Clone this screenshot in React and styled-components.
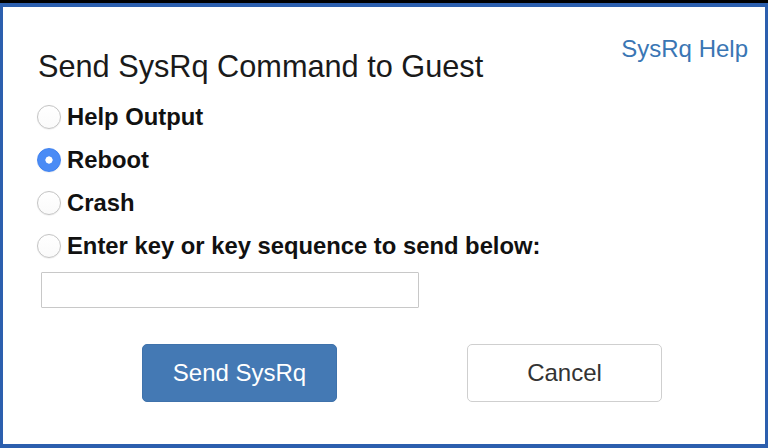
import React, { useState } from 'react';
import styled, { createGlobalStyle } from 'styled-components';

const GlobalStyle = createGlobalStyle`
  html, body {
    margin: 0;
    padding: 0;
    background: #000;
  }
  body {
    font-family: "Liberation Sans", Arial, Helvetica, sans-serif;
  }
`;

const Page = styled.div`
  width: 768px;
  height: 448px;
  padding-top: 3px;
  box-sizing: border-box;
  background: #000;
`;

const Frame = styled.div`
  height: 445px;
  box-sizing: border-box;
  border: solid #2c5fae;
  border-width: 4px 3px 4px 3px;
  background: #fff;
  display: flex;
  flex-direction: column;
  padding: 0 17px 0 35px;
`;

const Header = styled.div`
  display: flex;
  justify-content: space-between;
  align-items: flex-start;
`;

const Title = styled.h1`
  margin: 43px 0 0 0;
  font-size: 30.7px;
  line-height: 34px;
  font-weight: normal;
  color: #1a1a1a;
`;

const HelpLink = styled.a`
  margin-top: 28px;
  font-size: 24px;
  line-height: 28px;
  color: #3a76b4;
  text-decoration: none;
`;

const Options = styled.div`
  display: flex;
  flex-direction: column;
  margin-top: 11px;
`;

const Option = styled.label`
  display: flex;
  align-items: center;
  height: 43px;
  gap: 6px;
  font-size: 23.8px;
  font-weight: bold;
  color: #111;
  cursor: pointer;
`;

const Radio = styled.input`
  appearance: none;
  margin: 0 0 0 -1px;
  width: 24px;
  height: 24px;
  border-radius: 50%;
  box-sizing: border-box;
  border: 1px solid ${p => (p.checked ? '#3f82f0' : '#c4c4c4')};
  background: ${p =>
    p.checked
      ? 'radial-gradient(circle, #fff 0 3.3px, #4a8bf5 3.9px)'
      : 'linear-gradient(#ffffff, #fafafa)'};
  box-shadow: 0 0.5px 1px rgba(0, 0, 0, 0.1);
`;

const KeyInput = styled.input`
  margin: 5px 0 0 3px;
  width: 378px;
  height: 36px;
  box-sizing: border-box;
  border: 1px solid #c8c8c8;
  border-radius: 1px;
  font-size: 18px;
  padding: 0 8px;
  outline: none;
`;

const Buttons = styled.div`
  display: flex;
  gap: 130px;
  margin: 36px 0 0 104px;
`;

const Button = styled.button`
  width: 195px;
  height: 58px;
  box-sizing: border-box;
  border-radius: 5px;
  font-family: inherit;
  font-size: 24px;
  cursor: pointer;
  border: 1px solid ${p => (p.primary ? '#3f72ab' : '#cfcfcf')};
  background: ${p => (p.primary ? '#4479b4' : '#fff')};
  color: ${p => (p.primary ? '#fff' : '#333')};
`;

const options = [
  'Help Output',
  'Reboot',
  'Crash',
  'Enter key or key sequence to send below:',
];

export default function App() {
  const [selected, setSelected] = useState(1);

  return (
    <Page>
      <GlobalStyle />
      <Frame>
        <Header>
          <Title>Send SysRq Command to Guest</Title>
          <HelpLink href="#">SysRq Help</HelpLink>
        </Header>
        <Options>
          {options.map((label, i) => (
            <Option key={label}>
              <Radio
                type="radio"
                name="sysrq"
                checked={selected === i}
                onChange={() => setSelected(i)}
              />
              {label}
            </Option>
          ))}
        </Options>
        <KeyInput type="text" />
        <Buttons>
          <Button primary>Send SysRq</Button>
          <Button>Cancel</Button>
        </Buttons>
      </Frame>
    </Page>
  );
}
